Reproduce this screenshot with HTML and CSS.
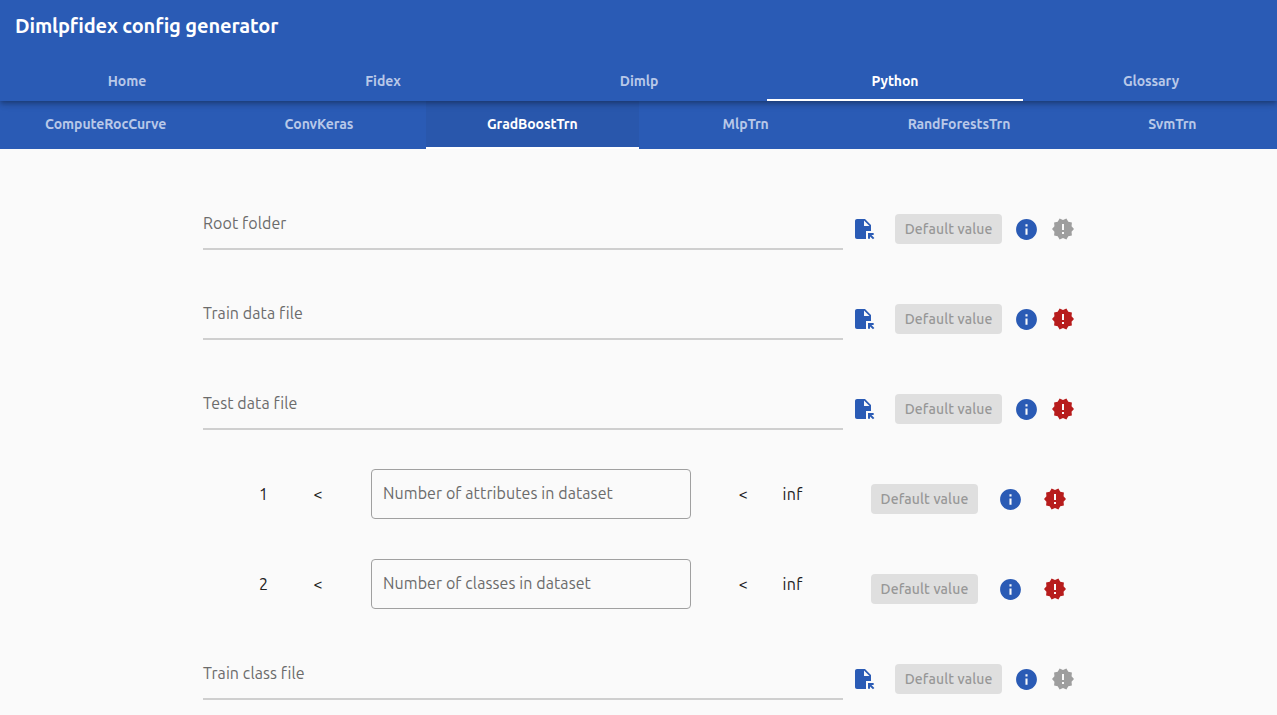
FILE: index.html
```html
<!DOCTYPE html>
<html lang="en">
<head>
<meta charset="utf-8">
<title>Dimlpfidex config generator</title>
<link rel="stylesheet" href="styles.css">
</head>
<body>
<svg class="sprite" aria-hidden="true">
  <symbol id="file" viewBox="0 0 24 24"><path d="M14 2H6c-1.1 0-1.99.9-1.99 2L4 20c0 1.1.89 2 1.99 2H15v-8h5V8l-6-6zm-1 7V3.5L18.5 9H13zm4 12.66V16h5.66v2h-2.24l2.95 2.95-1.41 1.41L19 19.41v2.24h-2z"/></symbol>
  <symbol id="info" viewBox="0 0 24 24"><path d="M12 2C6.48 2 2 6.48 2 12s4.480 10 10 10 10-4.480 10-10S17.520 2 12 2zm1 15h-2v-6h2v6zm0-8h-2V7h2v2z"/></symbol>
  <symbol id="alert" viewBox="0 0 24 24"><path d="M23 12l-2.44-2.78.34-3.68-3.61-.82-1.89-3.18L12 3 8.600 1.540 6.710 4.720l-3.610.810.340 3.680L1 12l2.440 2.780-.340 3.690 3.610.820 1.890 3.180L12 21l3.400 1.460 1.890-3.180 3.610-.820-.340-3.680L23 12zm-10 5h-2v-2h2v2zm0-4h-2V7h2v6z"/></symbol>
</svg>
<header class="header">
  <h1 class="title">Dimlpfidex config generator</h1>
  <nav class="tabs main-tabs">
    <a class="tab">Home</a><a class="tab">Fidex</a><a class="tab">Dimlp</a><a class="tab active">Python</a><a class="tab">Glossary</a>
  </nav>
</header>
<nav class="tabs subtabs">
  <a class="tab">ComputeRocCurve</a><a class="tab">ConvKeras</a><a class="tab active">GradBoostTrn</a><a class="tab">MlpTrn</a><a class="tab">RandForestsTrn</a><a class="tab">SvmTrn</a>
</nav>
<main class="form">
  <div class="row">
    <div class="line"><span class="label">Root folder</span></div>
    <svg class="icon file"><use href="#file"/></svg>
    <button class="btn" disabled>Default value</button>
    <svg class="icon info"><use href="#info"/></svg>
    <svg class="icon alert optional"><use href="#alert"/></svg>
  </div>
  <div class="row">
    <div class="line"><span class="label">Train data file</span></div>
    <svg class="icon file"><use href="#file"/></svg>
    <button class="btn" disabled>Default value</button>
    <svg class="icon info"><use href="#info"/></svg>
    <svg class="icon alert"><use href="#alert"/></svg>
  </div>
  <div class="row">
    <div class="line"><span class="label">Test data file</span></div>
    <svg class="icon file"><use href="#file"/></svg>
    <button class="btn" disabled>Default value</button>
    <svg class="icon info"><use href="#info"/></svg>
    <svg class="icon alert"><use href="#alert"/></svg>
  </div>
  <div class="row range">
    <span class="min">1</span><span class="lt">&lt;</span>
    <div class="box"><span class="label">Number of attributes in dataset</span></div>
    <span class="lt2">&lt;</span><span class="max">inf</span>
    <button class="btn" disabled>Default value</button>
    <svg class="icon info"><use href="#info"/></svg>
    <svg class="icon alert"><use href="#alert"/></svg>
  </div>
  <div class="row range">
    <span class="min">2</span><span class="lt">&lt;</span>
    <div class="box"><span class="label">Number of classes in dataset</span></div>
    <span class="lt2">&lt;</span><span class="max">inf</span>
    <button class="btn" disabled>Default value</button>
    <svg class="icon info"><use href="#info"/></svg>
    <svg class="icon alert"><use href="#alert"/></svg>
  </div>
  <div class="row">
    <div class="line"><span class="label">Train class file</span></div>
    <svg class="icon file"><use href="#file"/></svg>
    <button class="btn" disabled>Default value</button>
    <svg class="icon info"><use href="#info"/></svg>
    <svg class="icon alert optional"><use href="#alert"/></svg>
  </div>
</main>
</body>
</html>
```
FILE: styles.css
```css
* { box-sizing: border-box; }
body {
  margin: 0;
  overflow: hidden;
  background: #fafafa;
  color: #212121;
  font-family: Ubuntu, "Noto Sans", sans-serif;
}
.sprite { display: none; }
.header {
  position: relative;
  z-index: 1;
  height: 101px;
  padding-top: 12px;
  background: #2a5bb5;
  box-shadow: 0 2px 4px -1px rgba(0,0,0,.2), 0 4px 5px rgba(0,0,0,.14), 0 1px 10px rgba(0,0,0,.12);
}
.title {
  margin: 0 0 0 15px;
  height: 49px;
  font-size: 20px;
  line-height: 28px;
  font-weight: 600;
  letter-spacing: -.12px;
  color: #fff;
}
.tabs { display: flex; background: #2a5bb5; }
.main-tabs { margin: 0 -2px 0 -1px; }
.tab {
  flex: 1 1 0;
  height: 40px;
  text-align: center;
  font-size: 14px;
  line-height: 40px;
  font-weight: 600;
  letter-spacing: -.08px;
  color: #b8c8e8;
}
.tab.active { color: #fff; border-bottom: 2px solid #fff; }
.subtabs { margin: 0 -2px 0 -1px; }
.subtabs .tab { height: 48px; line-height: 46px; }
.subtabs .active { background: #2957ac; }
.form { padding: 65px 0 0 203px; }
.row { display: flex; height: 90px; }
.row:last-child { height: 36px; }
.line { width: 640px; height: 36px; border-bottom: 2px solid #cfcfcf; }
.label {
  display: block;
  margin-top: -1px;
  font-size: 16px;
  line-height: 20px;
  letter-spacing: .09px;
  color: #6b6b6b;
}
.icon { width: 25px; height: 25px; margin-top: 3px; flex: none; fill: #2a5bb5; }
.icon.file { width: 24px; height: 24px; margin: 3px 0 0 7.6px; }
.icon.info { margin-left: 11.5px; }
.icon.alert { width: 24px; height: 24px; margin-left: 12px; fill: #b71c1c; }
.icon.optional { fill: #9e9e9e; }
.btn {
  width: 107.8px;
  height: 30px;
  margin: 0 0 0 20.1px;
  padding: 0;
  border: 0;
  border-radius: 4px;
  background: #dfdfdf;
  color: #979797;
  font: 500 14px/30px Ubuntu, "Noto Sans", sans-serif;
  letter-spacing: .14px;
}
.range { font-size: 16px; line-height: 20px; letter-spacing: .4px; }
.min { width: 54.5px; margin-left: 56px; }
.lt { width: 57.5px; }
.box {
  width: 320px;
  height: 50px;
  margin-top: -15px;
  padding: 14px 11px;
  border: 1px solid #a0a0a0;
  border-radius: 4px;
}
.lt2 { width: 43.7px; margin-left: 47.8px; }
.max { width: 88.1px; }
.range .btn { margin-left: 0; }
.range .info { margin-left: 19.6px; }
.range .alert { margin-left: 20px; }
```
